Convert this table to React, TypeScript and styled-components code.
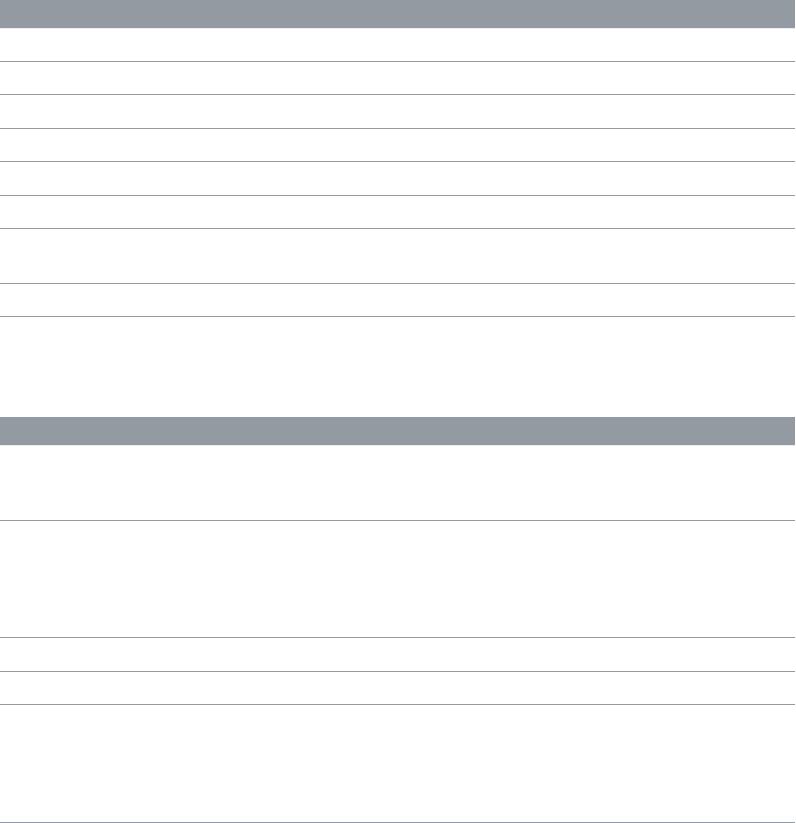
import React from "react";
import styled, { createGlobalStyle } from "styled-components";

const GlobalStyle = createGlobalStyle`
  html, body {
    margin: 0;
    padding: 0;
    background: #ffffff;
    font-family: "Liberation Sans", Arial, sans-serif;
  }
`;

// each section: an empty header band and a list of empty rows (height in px, border included)
const sections = [
  {
    key: "first",
    rows: [33, 33, 34, 33, 34, 33, 55, 33],
  },
  {
    key: "second",
    rows: [75, 117, 34, 33, 118],
  },
];

export default function App() {
  return (
    <>
      <GlobalStyle />
      <Page>
        {sections.map((section) => (
          <Section key={section.key}>
            <HeaderBar />
            <HeaderRule />
            {section.rows.map((h, i) => (
              <Row key={i} $height={h} />
            ))}
          </Section>
        ))}
      </Page>
    </>
  );
}

const Page = styled.div`
  width: 795px;
  display: flex;
  flex-direction: column;
  gap: 100px;
`;

const Section = styled.section`
  display: flex;
  flex-direction: column;
`;

const HeaderBar = styled.div`
  height: 28px;
  background: #939aa2;
`;

const HeaderRule = styled.div`
  height: 1px;
  background: #eceef0;
`;

const Row = styled.div<{ $height: number }>`
  box-sizing: border-box;
  height: ${({ $height }) => $height}px;
  border-bottom: 1px solid #939aa2;
  font-size: 15px;
  line-height: 21px;
  color: #333;
`;
